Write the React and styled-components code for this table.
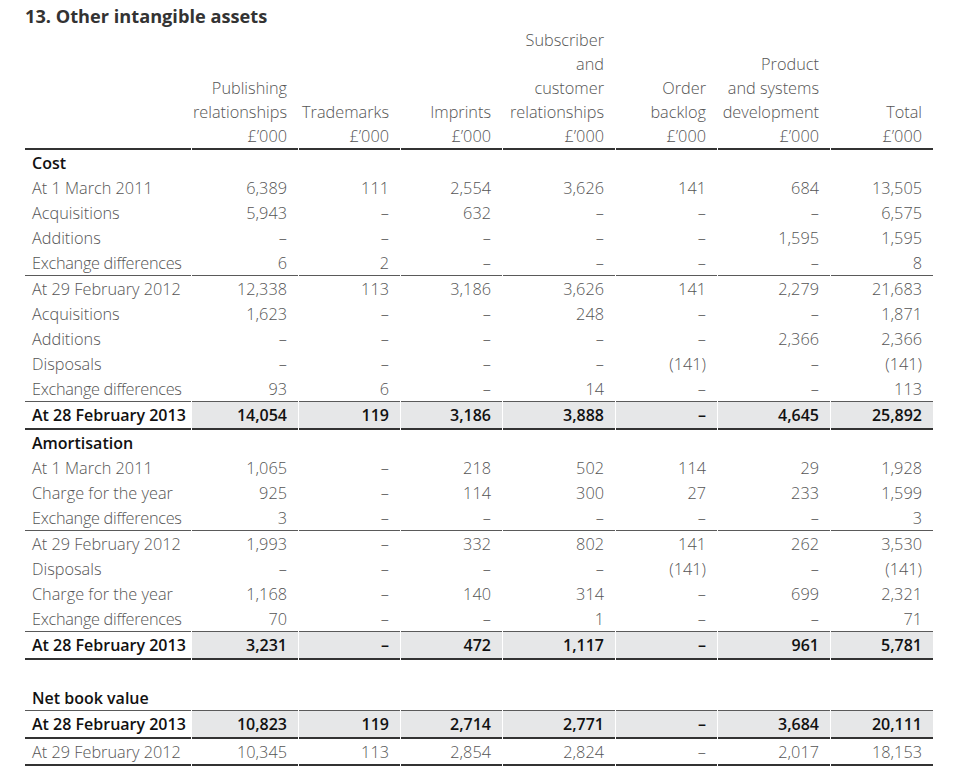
import React from 'react';
import styled, { createGlobalStyle } from 'styled-components';

const GlobalStyle = createGlobalStyle`
    html, body {
        margin: 0;
        padding: 0;
        background: #ffffff;
    }
    body {
        font-family: "Open Sans", "Liberation Sans", sans-serif;
    }
`;

const Page = styled.div`
    padding: 4px 0 0 24px;
    width: 909px;
`;

const Title = styled.h2`
    margin: 0 0 0 1px;
    font-size: 18.2px;
    line-height: 24px;
    font-weight: 700;
    color: #333333;
`;

const Table = styled.table`
    width: 909px;
    border-collapse: separate;
    border-spacing: 1px 0;
    table-layout: fixed;
    font-size: 16.3px;
`;

const HeadCell = styled.th`
    padding: 0 11px 0 0;
    height: 120px;
    vertical-align: bottom;
    text-align: right;
    font-weight: 300;
    line-height: 24px;
    color: #555555;
    white-space: nowrap;
    border-bottom: 2px solid #333333;
`;

// row height includes the bottom line in a separated table
const heights = { head: 25, row: 25, blank: 25, rule: 26, total: 28, last: 27 };

const Row = styled.tr`
    height: ${(p) => p.$height}px;
`;

const lineFor = (p) => {
    if (p.$heavy) return '2px solid #333333';
    if (p.$rule) return '1px solid #5a5a5a';
    return 'none';
};

const LabelCell = styled.td`
    padding: 0 0 0 7px;
    white-space: nowrap;
    font-size: ${(p) => (p.$bold ? '16px' : 'inherit')};
    letter-spacing: ${(p) => (p.$squeeze ? '-0.3px' : '0')};
    font-weight: ${(p) => (p.$bold ? 600 : 300)};
    color: ${(p) => (p.$bold ? '#111111' : '#555555')};
    border-bottom: ${lineFor};
`;

const NumCell = styled.td`
    padding: 0 11px 0 0;
    text-align: right;
    white-space: nowrap;
    font-size: ${(p) => (p.$bold ? '16px' : 'inherit')};
    font-weight: ${(p) => (p.$bold ? 600 : 300)};
    color: ${(p) => (p.$bold ? '#111111' : '#555555')};
    background: ${(p) => (p.$shade ? '#e6e7e8' : 'transparent')};
    border-bottom: ${lineFor};
`;

const columns = [
    { width: 166, lines: [] },
    { width: 106, lines: ['Publishing', 'relationships', '£\u2019000'] },
    { width: 101, lines: ['Trademarks', '£\u2019000'] },
    { width: 101, lines: ['Imprints', '£\u2019000'] },
    { width: 112, lines: ['Subscriber', 'and', 'customer', 'relationships', '£\u2019000'] },
    { width: 101, lines: ['Order', 'backlog', '£\u2019000'] },
    { width: 112, lines: ['Product', 'and systems', 'development', '£\u2019000'] },
    { width: 102, lines: ['Total', '£\u2019000'] },
];

const D = '\u2013';

// kind: head | row | rule | total | blank | last
const rows = [
    { kind: 'head', label: 'Cost' },
    { kind: 'row', label: 'At 1 March 2011', v: ['6,389', '111', '2,554', '3,626', '141', '684', '13,505'] },
    { kind: 'row', label: 'Acquisitions', v: ['5,943', D, '632', D, D, D, '6,575'] },
    { kind: 'row', label: 'Additions', v: [D, D, D, D, D, '1,595', '1,595'] },
    { kind: 'rule', label: 'Exchange differences', v: ['6', '2', D, D, D, D, '8'] },
    { kind: 'row', label: 'At 29 February 2012', v: ['12,338', '113', '3,186', '3,626', '141', '2,279', '21,683'] },
    { kind: 'row', label: 'Acquisitions', v: ['1,623', D, D, '248', D, D, '1,871'] },
    { kind: 'row', label: 'Additions', v: [D, D, D, D, D, '2,366', '2,366'] },
    { kind: 'row', label: 'Disposals', v: [D, D, D, D, '(141)', D, '(141)'] },
    { kind: 'rule', label: 'Exchange differences', v: ['93', '6', D, '14', D, D, '113'] },
    { kind: 'total', label: 'At 28 February 2013', v: ['14,054', '119', '3,186', '3,888', D, '4,645', '25,892'] },
    { kind: 'head', label: 'Amortisation' },
    { kind: 'row', label: 'At 1 March 2011', v: ['1,065', D, '218', '502', '114', '29', '1,928'] },
    { kind: 'row', label: 'Charge for the year', v: ['925', D, '114', '300', '27', '233', '1,599'] },
    { kind: 'rule', label: 'Exchange differences', v: ['3', D, D, D, D, D, '3'] },
    { kind: 'row', label: 'At 29 February 2012', v: ['1,993', D, '332', '802', '141', '262', '3,530'] },
    { kind: 'row', label: 'Disposals', v: [D, D, D, D, '(141)', D, '(141)'] },
    { kind: 'row', label: 'Charge for the year', v: ['1,168', D, '140', '314', D, '699', '2,321'] },
    { kind: 'rule', label: 'Exchange differences', v: ['70', D, D, '1', D, D, '71'] },
    { kind: 'total', label: 'At 28 February 2013', v: ['3,231', D, '472', '1,117', D, '961', '5,781'] },
    { kind: 'blank' },
    { kind: 'rule', head: true, label: 'Net book value' },
    { kind: 'total', label: 'At 28 February 2013', v: ['10,823', '119', '2,714', '2,771', D, '3,684', '20,111'] },
    { kind: 'last', label: 'At 29 February 2012', v: ['10,345', '113', '2,854', '2,824', D, '2,017', '18,153'] },
];

const BodyRow = ({ row }) => {
    const bold = row.kind === 'total' || row.kind === 'head' || row.head;
    const heavy = row.kind === 'total' || row.kind === 'last';
    const rule = row.kind === 'rule';
    const values = row.v || ['', '', '', '', '', '', ''];
    return (
        <Row $height={heights[row.kind]}>
            <LabelCell $bold={bold} $heavy={heavy} $rule={rule} $squeeze={row.label === 'Exchange differences'}>
                {row.label}
            </LabelCell>
            {values.map((val, i) => (
                <NumCell key={i} $bold={bold} $heavy={heavy} $rule={rule} $shade={row.kind === 'total'}>
                    {val}
                </NumCell>
            ))}
        </Row>
    );
};

const App = () => (
    <Page>
        <GlobalStyle />
        <Title>13. Other intangible assets</Title>
        <Table>
            <colgroup>
                {columns.map((c, i) => (
                    <col key={i} style={{ width: c.width }} />
                ))}
            </colgroup>
            <thead>
                <tr>
                    {columns.map((c, i) => (
                        <HeadCell key={i}>
                            {c.lines.map((l, j) => (
                                <div key={j}>{l}</div>
                            ))}
                        </HeadCell>
                    ))}
                </tr>
            </thead>
            <tbody>
                {rows.map((r, i) => (
                    <BodyRow key={i} row={r} />
                ))}
            </tbody>
        </Table>
    </Page>
);

export default App;
